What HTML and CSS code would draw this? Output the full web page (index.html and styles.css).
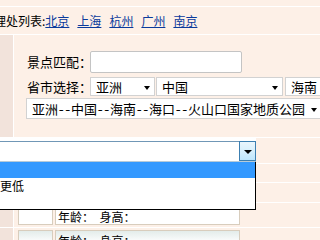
FILE: index.html
```html
<!DOCTYPE html>
<html lang="zh-CN">
<head>
<meta charset="utf-8">
<title>管理处列表</title>
<link rel="stylesheet" href="styles.css">
</head>
<body>
<div class="top"></div>
<div class="header">
  <span class="title">管理处列表:</span>
  <a href="#">北京</a><a href="#">上海</a><a href="#">杭州</a><a href="#">广州</a><a href="#">南京</a>
</div>
<div class="grid">
  <div class="row r1">
    <div class="side"></div>
    <div class="cell form">
      <div class="frow fr1">
        <span class="label">景点匹配：</span>
        <div class="input"></div>
      </div>
      <div class="frow fr2">
        <span class="label">省市选择：</span>
        <div class="select s1"><span>亚洲</span><i class="tri"></i></div>
        <div class="select s2"><span>中国</span><i class="tri"></i></div>
        <div class="select s3"><span>海南</span><i class="tri"></i></div>
      </div>
      <div class="frow fr3">
        <div class="select s4"><span>亚洲--中国--海南--海口--火山口国家地质公园</span><i class="tri"></i></div>
      </div>
    </div>
  </div>
  <div class="row r2"><div class="side"></div><div class="cell"></div></div>
  <div class="row r3"><div class="side"></div><div class="cell"></div></div>
  <div class="row r4"><div class="side"></div><div class="cell"></div></div>
  <div class="row r5">
    <div class="side"></div>
    <div class="cell boxes">
      <div class="box small"></div>
      <div class="box wide">年龄：&nbsp;&nbsp;身高：</div>
    </div>
  </div>
  <div class="row r6">
    <div class="side"></div>
    <div class="cell boxes">
      <div class="box small shade"></div>
      <div class="box wide shade">年龄：&nbsp;&nbsp;身高：</div>
    </div>
  </div>
</div>

<div class="dropdown">
  <div class="combo">
    <div class="combo-btn"><i class="btri"></i></div>
  </div>
  <ul class="list">
    <li class="sel">&nbsp;</li>
    <li>更低</li>
  </ul>
</div>
</body>
</html>
```

FILE: styles.css
```css
* { box-sizing: border-box; }
html, body { margin: 0; padding: 0; }
body {
  width: 320px;
  height: 240px;
  overflow: hidden;
  position: relative;
  background: #fdf0e7;
  color: #000;
  font-family: "Noto Sans CJK SC", "Liberation Sans", sans-serif;
  font-size: 12px;
  line-height: 14px;
}

.top {
  height: 7px;
  border-bottom: 1px solid #fff;
}

.header {
  height: 28px;
  border-bottom: 1px solid #fff;
  display: flex;
  align-items: center;
  white-space: nowrap;
  font-size: 12px;
}
.title { margin-left: -18px; margin-right: 0; }
.header a {
  color: #0a3a9c;
  text-decoration: underline;
  margin-right: 8px;
}

.row {
  display: flex;
  border-bottom: 1px solid #fff;
}
.side {
  width: 14px;
  flex: none;
  background: #f2e3db;
  border-right: 1px solid #fff;
}
.cell { flex: 1; min-width: 0; }

.r1 { height: 103px; }
.r2 { height: 26px; }
.r3 { height: 19px; }
.r4 { height: 20px; }
.r5 { height: 25px; }
.r6 { height: 40px; }

.form { padding: 16px 0 0 13px; }
.frow { display: flex; align-items: center; white-space: nowrap; }
.fr1 { height: 22px; }
.fr2 { height: 19px; margin-top: 4px; }
.fr3 { height: 21px; margin-top: 2px; margin-left: -1px; }
.label {
  width: 63px;
  flex: none;
  font-size: 13px;
  overflow: visible;
}

.input {
  width: 152px;
  height: 22px;
  background: #fff;
  border: 1px solid #c4c4c4;
  border-radius: 2px;
}

.select {
  position: relative;
  flex: none;
  height: 100%;
  background: #fff;
  border: 1px solid #d2d2d2;
  font-size: 13px;
  line-height: 17px;
  padding-left: 5px;
  overflow: hidden;
}
.select span { font-feature-settings: "hwid" 1; }
.s1 { width: 65px; margin-right: 1px; }
.s2 { width: 127px; margin-right: 2px; }
.s3 { width: 60px; }
.s4 { width: 296px; padding-left: 5px; line-height: 19px; }
.tri {
  position: absolute;
  right: 4px;
  top: 50%;
  margin-top: -1px;
  width: 0;
  height: 0;
  border-left: 3px solid transparent;
  border-right: 3px solid transparent;
  border-top: 4px solid #000;
}

.boxes {
  display: flex;
  padding: 3px 0 0 4px;
}
.r6 .boxes { padding-top: 2px; }
.box {
  height: 19px;
  background: #fff;
  border: 1px solid #d8cdbd;
  flex: none;
}
.small { width: 35px; margin-right: 2px; }
.wide {
  width: 185px;
  padding: 3px 0 0 2px;
  font-size: 12px;
  line-height: 13px;
  white-space: nowrap;
}
.shade { background: linear-gradient(#e3ecea, #ffffff 70%); }

/* open dropdown overlay */
.dropdown {
  position: absolute;
  left: -3px;
  top: 138px;
  width: 259px;
  padding-top: 3px;
  background: #fff;
}
.combo {
  position: relative;
  height: 21px;
  border: 1px solid #7097b6;
  border-bottom-color: #b7cbd8;
  background: #fff;
}
.combo-btn {
  position: absolute;
  right: -1px;
  top: -1px;
  width: 17px;
  height: 20px;
  border: 1px solid #3c7fb1;
  background: linear-gradient(#eaf6fd, #d9f0fc 45%, #bee6fd);
  display: flex;
  align-items: center;
  justify-content: center;
}
.btri {
  width: 0;
  height: 0;
  border-left: 4px solid transparent;
  border-right: 4px solid transparent;
  border-top: 4px solid #000;
  margin-top: 1px;
}
.list {
  list-style: none;
  margin: 0;
  padding: 0;
  height: 48px;
  background: #fff;
  border-right: 1px solid #000;
  border-bottom: 1px solid #000;
}
.list li {
  height: 16px;
  line-height: 16px;
  padding-left: 3px;
  font-size: 12px;
}
.list li.sel { background: #3399ff; }
```
